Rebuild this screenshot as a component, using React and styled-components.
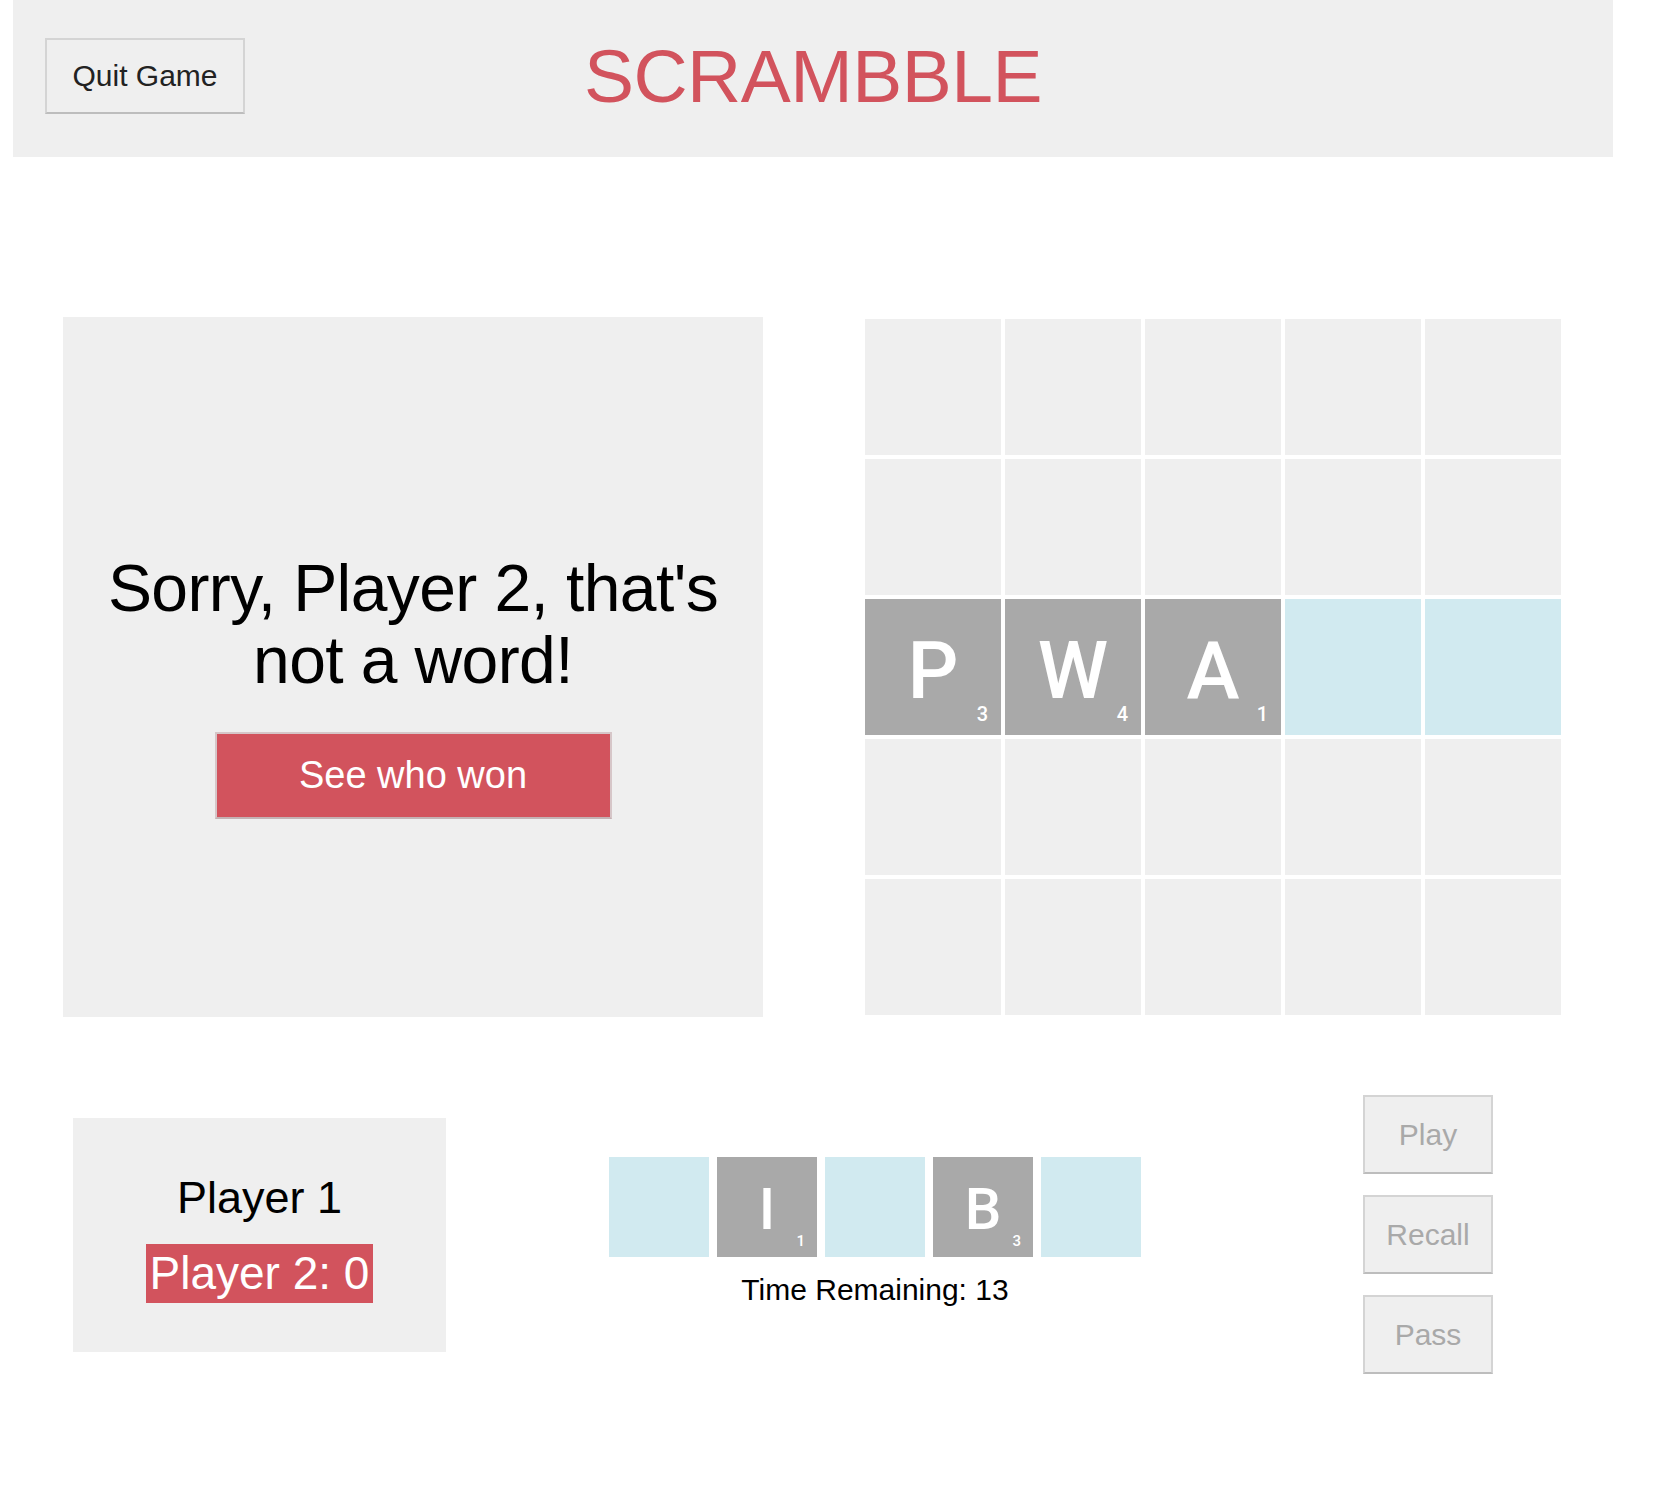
import React from "react";
import styled, { createGlobalStyle } from "styled-components";

const RED = "#d2535d";
const PANEL = "#efefef";
const TILE = "#a9a9a9";
const SLOT = "#d1eaf0";

const GlobalStyle = createGlobalStyle`
  html, body { margin: 0; padding: 0; background: #fff; }
  body { font-family: "Liberation Sans", Arial, Helvetica, sans-serif; color: #000; }
  * { box-sizing: border-box; }
`;

const Page = styled.div`
  width: 1600px;
  margin-left: 13px;
  padding-bottom: 120px;
`;

const Header = styled.header`
  height: 157px;
  background: ${PANEL};
  display: grid;
  grid-template-columns: 1fr auto 1fr;
  align-items: center;
  padding: 0 32px 5px;
`;

const GreyButton = styled.button`
  width: ${(p) => p.$w}px;
  height: ${(p) => p.$h}px;
  background: ${PANEL};
  border: 2px solid #d4d4d4;
  border-bottom-color: #bdbdbd;
  font-family: "Liberation Sans", Arial, sans-serif;
  font-size: 30px;
  color: ${(p) => (p.$muted ? "#a9a9a9" : "#222")};
  padding: 0;
  cursor: pointer;
  justify-self: start;
`;

const Title = styled.h1`
  margin: 0;
  font-size: 75px;
  font-weight: 400;
  line-height: 1;
  color: ${RED};
  letter-spacing: -0.5px;
`;

const Main = styled.main`
  display: flex;
  justify-content: space-between;
  padding: 160px 50px 0;
`;

const MessagePanel = styled.section`
  width: 700px;
  height: 700px;
  background: ${PANEL};
  display: flex;
  flex-direction: column;
  align-items: center;
  justify-content: center;
  padding: 0 20px;
`;

const Message = styled.h2`
  margin: 36px 0;
  font-size: 66px;
  line-height: 72px;
  font-weight: 400;
  letter-spacing: -0.6px;
  text-align: center;
`;

const RedButton = styled.button`
  width: 397px;
  height: 87px;
  background: ${RED};
  color: #fff;
  border: 2px solid #d6c6c8;
  border-bottom-color: #c4b2b4;
  font-family: "Liberation Sans", Arial, sans-serif;
  font-size: 38px;
  padding: 0;
  cursor: pointer;
`;

const Board = styled.div`
  width: 700px;
  height: 700px;
  display: grid;
  grid-template-columns: repeat(5, 140px);
  grid-template-rows: repeat(5, 140px);
`;

const bgFor = (kind) => (kind === "tile" ? TILE : kind === "slot" ? SLOT : PANEL);

const Cell = styled.div`
  position: relative;
  border: 2px solid #fff;
  background: ${(p) => bgFor(p.$kind)};
  display: flex;
  align-items: center;
  justify-content: center;
`;

const Letter = styled.span`
  color: #fff;
  font-family: Roboto, "Liberation Sans", Arial, sans-serif;
  font-size: ${(p) => p.$size}px;
  font-weight: 500;
  line-height: 1;
  padding-top: ${(p) => p.$pad}px;
`;

const Score = styled.span`
  position: absolute;
  right: ${(p) => p.$right}px;
  bottom: ${(p) => p.$bottom}px;
  color: #fff;
  font-family: Roboto, "Liberation Sans", Arial, sans-serif;
  font-size: ${(p) => p.$size}px;
  font-weight: 500;
  line-height: 1;
`;

const BottomRow = styled.div`
  display: flex;
  align-items: center;
  padding: 78px 0 0 60px;
`;

const PlayerBox = styled.div`
  width: 373px;
  height: 234px;
  background: ${PANEL};
  margin-right: 163px;
  display: flex;
  flex-direction: column;
  align-items: center;
  justify-content: center;
  gap: 18px;
  padding-top: 3px;
  font-size: 45px;
`;

const PlayerName = styled.div`
  line-height: 56px;
`;

const ActiveScore = styled.span`
  display: inline-block;
  background: ${RED};
  color: #fff;
  line-height: 59px;
  padding: 0 4px;
  font-size: 46px;
`;

const RackArea = styled.div`
  display: flex;
  flex-direction: column;
  align-items: center;
  gap: 16px;
  padding-bottom: 5px;
  margin-right: 222px;
`;

const Rack = styled.div`
  display: flex;
  gap: 8px;
`;

const RackTile = styled.div`
  position: relative;
  width: 100px;
  height: 100px;
  background: ${(p) => bgFor(p.$kind)};
  display: flex;
  align-items: center;
  justify-content: center;
`;

const Timer = styled.div`
  font-size: 30px;
  line-height: 34px;
`;

const Controls = styled.div`
  display: flex;
  flex-direction: column;
  gap: 21px;
`;

const board = [
  [null, null, null, null, null],
  [null, null, null, null, null],
  [
    { l: "P", s: 3 },
    { l: "W", s: 4 },
    { l: "A", s: 1 },
    "slot",
    "slot",
  ],
  [null, null, null, null, null],
  [null, null, null, null, null],
];

const rack = ["slot", { l: "I", s: 1 }, "slot", { l: "B", s: 3 }, "slot"];

export default function App() {
  return (
    <>
      <GlobalStyle />
      <Page>
        <Header>
          <GreyButton $w={200} $h={76}>Quit Game</GreyButton>
          <Title>SCRAMBBLE</Title>
          <div />
        </Header>

        <Main>
          <MessagePanel>
            <Message>Sorry, Player 2, that's not a word!</Message>
            <RedButton>See who won</RedButton>
          </MessagePanel>

          <Board>
            {board.flatMap((row, r) =>
              row.map((c, i) => {
                if (c && typeof c === "object") {
                  return (
                    <Cell key={`${r}-${i}`} $kind="tile">
                      <Letter $size={80} $pad={8}>{c.l}</Letter>
                      <Score $size={20} $right={13} $bottom={11}>{c.s}</Score>
                    </Cell>
                  );
                }
                return <Cell key={`${r}-${i}`} $kind={c === "slot" ? "slot" : "empty"} />;
              })
            )}
          </Board>
        </Main>

        <BottomRow>
          <PlayerBox>
            <PlayerName>Player 1</PlayerName>
            <ActiveScore>Player 2: 0</ActiveScore>
          </PlayerBox>

          <RackArea>
            <Rack>
              {rack.map((t, i) =>
                typeof t === "object" ? (
                  <RackTile key={i} $kind="tile">
                    <Letter $size={58} $pad={4}>{t.l}</Letter>
                    <Score $size={15} $right={12} $bottom={8}>{t.s}</Score>
                  </RackTile>
                ) : (
                  <RackTile key={i} $kind="slot" />
                )
              )}
            </Rack>
            <Timer>Time Remaining: 13</Timer>
          </RackArea>

          <Controls>
            <GreyButton $w={130} $h={79} $muted>Play</GreyButton>
            <GreyButton $w={130} $h={79} $muted>Recall</GreyButton>
            <GreyButton $w={130} $h={79} $muted>Pass</GreyButton>
          </Controls>
        </BottomRow>
      </Page>
    </>
  );
}
